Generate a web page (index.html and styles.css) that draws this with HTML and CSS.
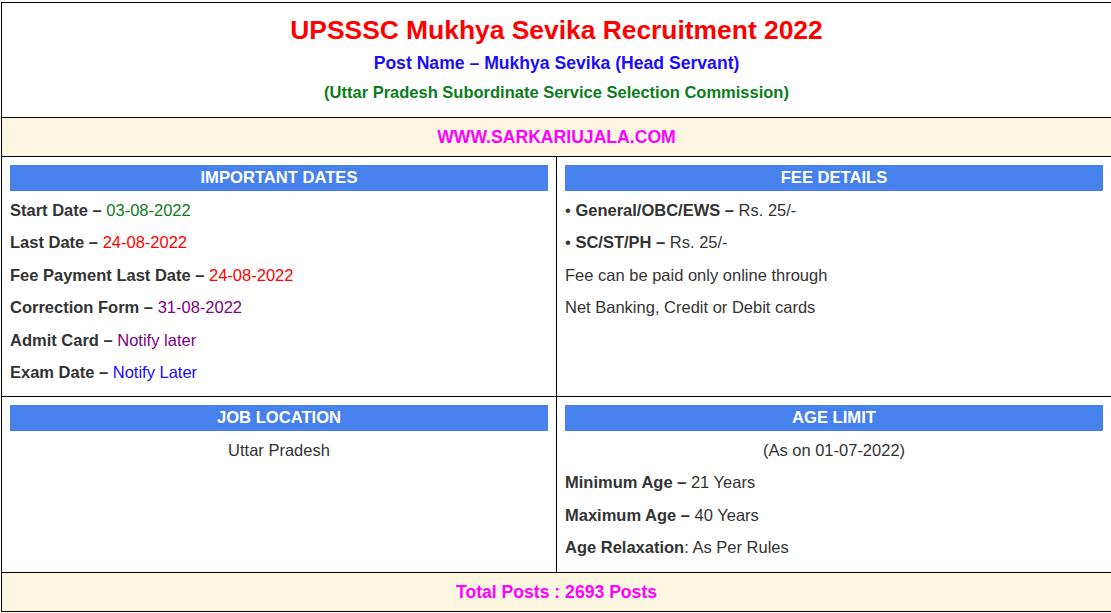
FILE: index.html
```html
<!DOCTYPE html>
<html lang="en">
<head>
<meta charset="utf-8">
<title>UPSSSC Mukhya Sevika Recruitment 2022</title>
<link rel="stylesheet" href="styles.css">
</head>
<body>
<div class="sheet">
  <header class="head">
    <h1 class="title">UPSSSC Mukhya Sevika Recruitment 2022</h1>
    <p class="post">Post Name – Mukhya Sevika (Head Servant)</p>
    <p class="org">(Uttar Pradesh Subordinate Service Selection Commission)</p>
  </header>
  <div class="band">WWW.SARKARIUJALA.COM</div>
  <div class="grid">
    <section class="cell left top">
      <h2 class="bar">IMPORTANT DATES</h2>
      <p class="line"><b>Start Date –</b> <span class="green">03-08-2022</span></p>
      <p class="line"><b>Last Date –</b> <span class="red">24-08-2022</span></p>
      <p class="line"><b>Fee Payment Last Date –</b> <span class="red">24-08-2022</span></p>
      <p class="line"><b>Correction Form –</b> <span class="purple">31-08-2022</span></p>
      <p class="line"><b>Admit Card –</b> <span class="purple">Notify later</span></p>
      <p class="line"><b>Exam Date –</b> <span class="blue">Notify Later</span></p>
    </section>
    <section class="cell top">
      <h2 class="bar">FEE DETAILS</h2>
      <p class="line">• <b>General/OBC/EWS –</b> Rs. 25/-</p>
      <p class="line">• <b>SC/ST/PH –</b> Rs. 25/-</p>
      <p class="line">Fee can be paid only online through</p>
      <p class="line">Net Banking, Credit or Debit cards</p>
    </section>
    <section class="cell left">
      <h2 class="bar">JOB LOCATION</h2>
      <p class="line center">Uttar Pradesh</p>
    </section>
    <section class="cell">
      <h2 class="bar">AGE LIMIT</h2>
      <p class="line center">(As on 01-07-2022)</p>
      <p class="line"><b>Minimum Age –</b> 21 Years</p>
      <p class="line"><b>Maximum Age –</b> 40 Years</p>
      <p class="line"><b>Age Relaxation</b>: As Per Rules</p>
    </section>
  </div>
  <div class="band total">Total Posts : 2693 Posts</div>
</div>
</body>
</html>
```

FILE: styles.css
```css
html {
  overflow: hidden;
}
body {
  margin: 0;
  font-family: "Liberation Sans", Arial, sans-serif;
  color: #333;
  background: #fff;
}
.sheet {
  box-sizing: border-box;
  width: 1111px;
  margin: 2px 0 0 1px;
  border: 1px solid #000;
}
.head {
  height: 115px;
  box-sizing: border-box;
  padding-top: 10px;
  border-bottom: 1px solid #000;
  text-align: center;
  font-weight: bold;
}
.title {
  margin: 0;
  font-size: 26.4px;
  line-height: 34px;
  color: #ff0000;
}
.post {
  margin: 3px 0 0;
  font-size: 17.6px;
  line-height: 26px;
  color: #1a0dff;
}
.org {
  margin: 3px 0 0;
  font-size: 16.5px;
  line-height: 26px;
  color: #0a7d1a;
}
.band {
  height: 38px;
  line-height: 38px;
  background: #fdf6e1;
  text-align: center;
  font-weight: bold;
  font-size: 17.6px;
  color: #ff00ff;
  border-bottom: 1px solid #000;
}
.band.total {
  border-bottom: 0;
}
.grid {
  display: grid;
  grid-template-columns: 555px 554px;
  grid-template-rows: 240px 175px;
  border-bottom: 1px solid #000;
}
.cell {
  padding: 8px;
}
.cell.left {
  border-right: 1px solid #000;
}
.cell.top {
  border-bottom: 1px solid #000;
}
.bar {
  margin: 0 0 3px;
  height: 26px;
  line-height: 26px;
  background: #4681ee;
  color: #fff;
  text-align: center;
  font-size: 16.6px;
  font-weight: bold;
}
.line {
  margin: 0;
  font-size: 16.5px;
  line-height: 32.4px;
  white-space: nowrap;
}
.line b {
  color: #333;
}
.center {
  text-align: center;
}
.green { color: #0a7d1a; }
.red { color: #ff0000; }
.purple { color: #800080; }
.blue { color: #1a0dff; }
```
